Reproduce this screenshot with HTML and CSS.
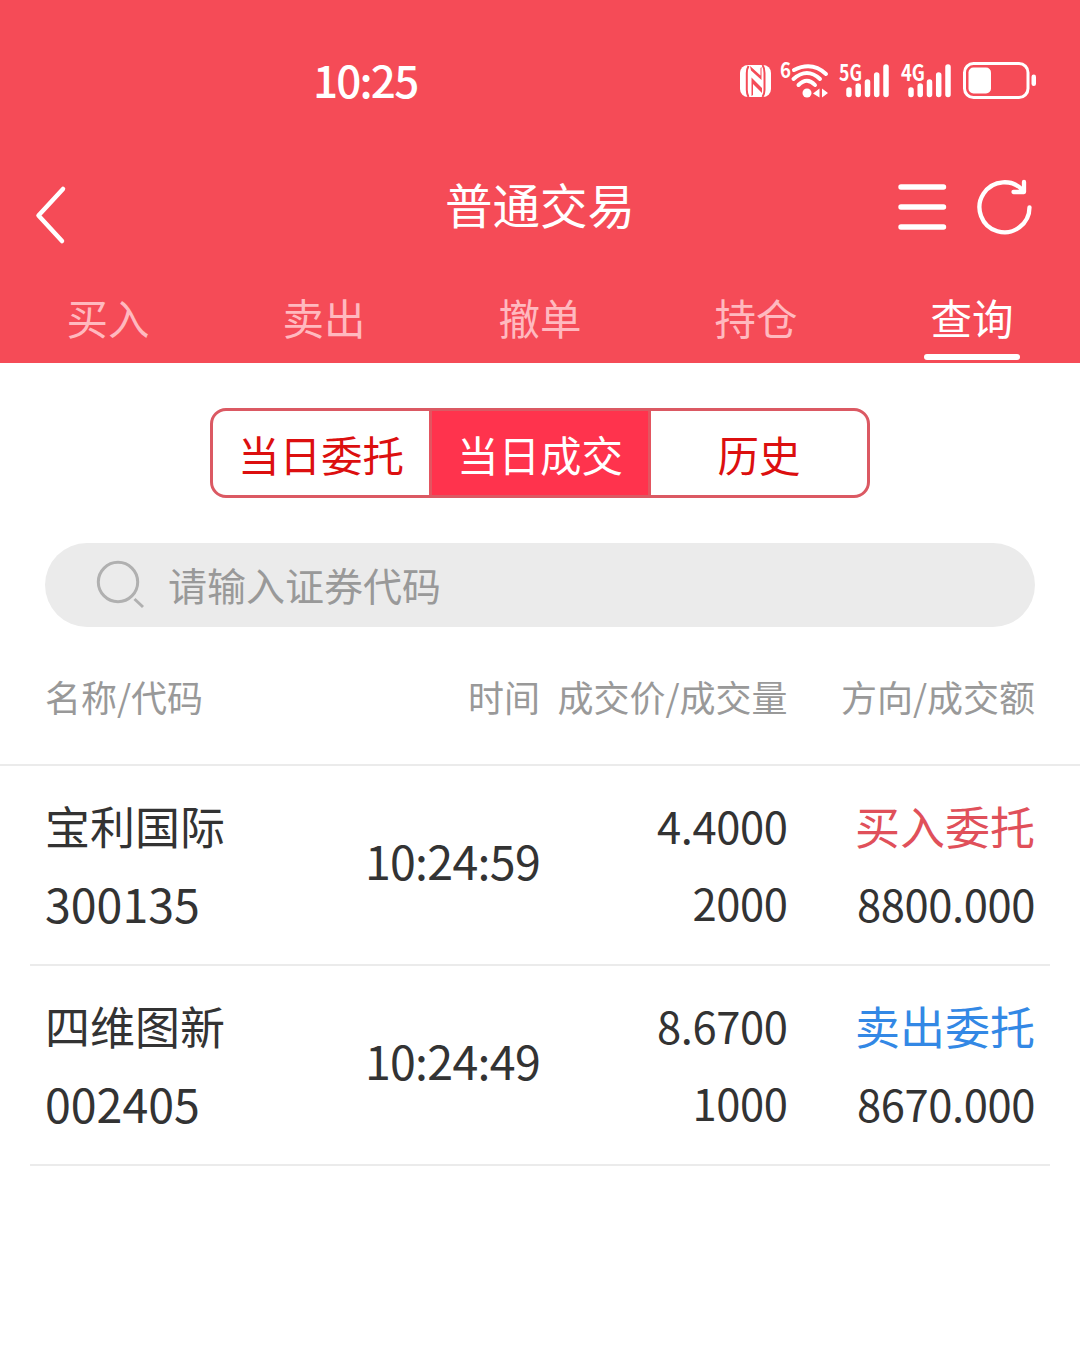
FILE: index.html
```html
<!DOCTYPE html>
<html lang="zh-CN">
	<head>
		<meta charset="utf-8">
		<title>普通交易</title>
		<link rel="stylesheet" href="styles.css">
	</head>
	<body>
		<header class="header">
			<div class="status">
				<div class="clock">10:25</div>
				<div class="status-icons">
					<svg class="nfc" viewBox="0 0 32 40">
						<rect x="0" y="3" width="31" height="32" rx="8" fill="#fff" />
						<path class="cut" d="M8.500 4Q6.800 7 6.800 11V28Q6.800 32 8.500 35M22.500 3Q24.500 6 24.500 11V28Q24.500 32 22.500 35" />
						<path class="gap" d="M10 4L20.500 13.500V6L21.500 5V18L11 8.500ZM11.500 34V15.500L22 26V31L13 22V33Z" />
					</svg>
					<svg class="wifi" viewBox="0 0 50 40">
						<text x="0" y="16" font-size="21" textLength="11" lengthAdjust="spacingAndGlyphs">6</text>
						<g class="line" stroke-width="4">
							<path d="M14 8Q32-1 46 12" />
							<path d="M13.500 17Q27 5 40 17" />
							<path d="M18.500 23Q27 14.500 35 23" />
						</g>
						<circle cx="27" cy="31" r="4.500" />
						<path d="M39.500 26.500V35.500L33 31.500ZM42 26.500V35.500L48 31Z" />
					</svg>
					<svg class="signal" viewBox="0 0 50 40">
						<text x="0" y="18.500" font-size="22" textLength="23" lengthAdjust="spacingAndGlyphs">5G</text>
						<path class="line" stroke-width="5.500" d="M10 28V32.500M19.200 24V32.500M28.500 20V32.500M37.700 13V32.500M47 5V32.500" />
					</svg>
					<svg class="signal" viewBox="0 0 50 40">
						<text x="0" y="18.500" font-size="22" textLength="24" lengthAdjust="spacingAndGlyphs">4G</text>
						<path class="line" stroke-width="5.500" d="M10 28V32.500M19.200 24V32.500M28.500 20V32.500M37.700 13V32.500M47 5V32.500" />
					</svg>
					<svg class="battery" viewBox="0 0 74 40">
						<rect class="line" x="1.500" y="1.500" width="63.500" height="34" rx="9" stroke-width="3" />
						<rect x="5.500" y="5.500" width="22.500" height="26" rx="5" />
						<rect x="68.500" y="12.500" width="4.500" height="11.500" rx="2.200" />
					</svg>
				</div>
			</div>
			<div class="nav">
				<svg class="back" viewBox="0 0 34 60">
					<path class="line" stroke-width="4.500" d="M28 4L3.500 30.500L27 56" />
				</svg>
				<h1>普通交易</h1>
				<div class="nav-actions">
					<svg class="menu" viewBox="0 0 50 60">
						<path class="line" stroke-width="5.400" d="M3 10H45.500M3 30H45.500M3 50H45.500" />
					</svg>
					<svg class="refresh" viewBox="0 0 60 60">
						<path class="line" stroke-width="4.300" d="M52.500 30.300A25 25 0 1 1 46.500 14M47 5V15H36.500" />
					</svg>
				</div>
			</div>
			<nav class="tabs">
				<div class="tab">买入</div>
				<div class="tab">卖出</div>
				<div class="tab">撤单</div>
				<div class="tab">持仓</div>
				<div class="tab active">查询</div>
			</nav>
		</header>
		<div class="segments">
			<div class="segment">当日委托</div>
			<div class="segment active">当日成交</div>
			<div class="segment">历史</div>
		</div>
		<div class="search">
			<svg viewBox="0 0 50 50">
				<circle cx="22" cy="22" r="19.700" />
				<path d="M38.500 39L47 47" />
			</svg>
			<span>请输入证券代码</span>
		</div>
		<div class="row head">
			<div>名称/代码</div>
			<div>时间</div>
			<div>成交价/成交量</div>
			<div>方向/成交额</div>
		</div>
		<div class="list">
			<div class="row">
				<div class="stock">宝利国际<br><span class="code">300135</span></div>
				<div class="time">10:24:59</div>
				<div class="num">4.4000<br>2000</div>
				<div class="num"><span class="side buy">买入委托</span><br>8800.000</div>
			</div>
			<div class="row">
				<div class="stock">四维图新<br><span class="code">002405</span></div>
				<div class="time">10:24:49</div>
				<div class="num">8.6700<br>1000</div>
				<div class="num"><span class="side sell">卖出委托</span><br>8670.000</div>
			</div>
		</div>
	</body>
</html>
```

FILE: styles.css
```css
* {
	box-sizing: border-box;
}

body {
	margin: 0;
	background: #fff;
	color: #333;
	font-family: "Noto Sans CJK SC", sans-serif;
}

svg {
	display: block;
	flex: none;
	overflow: visible;
}

.header {
	height: 363px;
	background: #f54b57;
	color: #fff;
}

.header svg {
	fill: #fff;
}

.header svg .line {
	fill: none;
	stroke: #fff;
	stroke-linecap: round;
	stroke-linejoin: round;
}

.status {
	display: flex;
	justify-content: space-between;
	height: 163px;
	padding: 62px 43px 0 313px;
}

.clock {
	font-size: 44px;
	font-weight: 500;
	line-height: 35px;
	letter-spacing: -1.8px;
}

.status-icons {
	display: flex;
	height: 40px;
}

.status-icons text {
	font-family: "Noto Sans CJK SC", sans-serif;
	font-weight: bold;
}

.nfc {
	width: 32px;
	margin-right: 8px;
}

.nfc .cut {
	fill: none;
	stroke: #f54b57;
	stroke-width: 2;
}

.nfc .gap {
	fill: #f54b57;
}

.wifi {
	width: 50px;
	margin-right: 9px;
}

.signal {
	width: 50px;
	margin-right: 12px;
}

.battery {
	width: 74px;
}

.nav {
	display: grid;
	grid-template-columns: 1fr auto 1fr;
	height: 112px;
	padding: 0 43px 0 35px;
}

.back {
	width: 34px;
	height: 60px;
	margin-top: 22px;
}

.nav h1 {
	margin: 0 -8px 0 0;
	font-size: 47.500px;
	font-weight: 400;
	line-height: 81px;
}

.nav-actions {
	display: flex;
	justify-content: flex-end;
	gap: 29px;
	padding-top: 14px;
}

.menu {
	width: 50px;
	height: 60px;
}

.refresh {
	width: 60px;
	height: 60px;
}

.tabs {
	display: grid;
	grid-template-columns: repeat(5, 1fr);
	height: 88px;
}

.tab {
	display: flex;
	flex-direction: column;
	align-items: center;
	padding-top: 5px;
	color: #ffb9bf;
	font-size: 41.500px;
	line-height: 74px;
}

.tab.active {
	color: #fff;
}

.tab.active::after {
	content: "";
	width: 96px;
	height: 6px;
	border-radius: 3px;
	background: #fff;
}

.segments {
	display: grid;
	grid-template-columns: 219px 216px 219px;
	width: 660px;
	height: 90px;
	margin: 45px auto 0;
	border: 3px solid #db5963;
	border-radius: 16px;
	overflow: hidden;
}

.segment {
	color: #dc0f0f;
	font-size: 41.500px;
	line-height: 86px;
	text-align: center;
}

.segment:first-child {
	border-right: 3px solid #e35560;
}

.segment:last-child {
	border-left: 3px solid #e35560;
}

.segment.active {
	background: #ff334d;
	color: #fff;
}

.search {
	display: flex;
	align-items: center;
	height: 84px;
	margin: 45px 45px 0;
	padding-left: 51px;
	border-radius: 42px;
	background: #ebebeb;
	color: #999;
	font-size: 39px;
}

.search svg {
	width: 50px;
	height: 50px;
	margin-right: 22px;
	fill: none;
	stroke: #b0b0b0;
	stroke-width: 3;
}

.search span {
	line-height: 54px;
	padding-bottom: 2px;
}

.row {
	display: grid;
	grid-template-columns: repeat(4, 1fr);
	text-align: right;
	white-space: nowrap;
}

.row > :first-child {
	text-align: left;
}

.head {
	height: 139px;
	padding: 0 45px;
	border-bottom: 2px solid #ebebeb;
	color: #999;
	font-size: 36px;
	line-height: 138px;
}

.list {
	padding: 0 30px;
}

.list .row {
	height: 200px;
	padding: 21px 15px 0;
	border-bottom: 2px solid #ebebeb;
	line-height: 77px;
}

.stock, .side {
	font-size: 45px;
	letter-spacing: 0;
}

.code, .time {
	font-size: 46.500px;
}

.time {
	line-height: 146px;
	letter-spacing: -0.7px;
}

.num {
	font-size: 43.500px;
	letter-spacing: -0.4px;
}

.buy {
	color: #e0505a;
}

.sell {
	color: #3388e5;
}
```
